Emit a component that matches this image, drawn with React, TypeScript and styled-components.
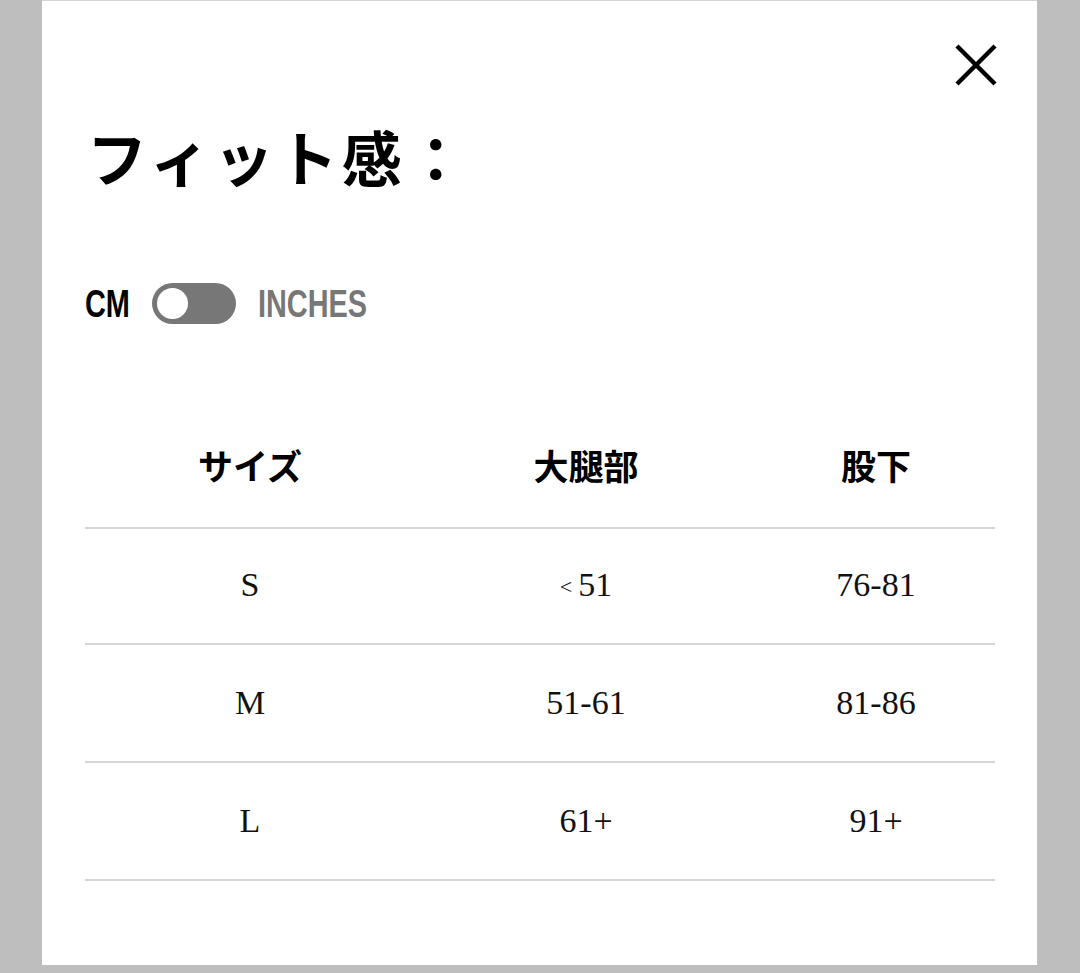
import React, { useState } from 'react';
import styled, { createGlobalStyle } from 'styled-components';

const JP_SANS = `"Noto Sans CJK JP", "Noto Sans", sans-serif`;
const UNIT_FONT = `"Liberation Sans", Arial, sans-serif`;
const SERIF = `"Liberation Serif", "Noto Sans CJK JP", serif`;

// the unit labels are a condensed face; squeeze Liberation Sans Bold to match
const SQUEEZE = 0.74;

const rows = [
  { size: 'S', thigh: '< 51', inseam: '76-81' },
  { size: 'M', thigh: '51-61', inseam: '81-86' },
  { size: 'L', thigh: '61+', inseam: '91+' },
];

// the "<" in the source is set smaller than the digits
const renderValue = (value: string) =>
  value.startsWith('<') ? (
    <>
      <StLess>&lt;</StLess>
      {value.slice(1).trim()}
    </>
  ) : (
    value
  );

const App: React.FC = () => {
  const [inches, setInches] = useState(false);

  return (
    <>
      <GlobalStyle />
      <StBackdrop>
        <StModal>
          <StCloseButton aria-label="close">
            <svg width="42" height="42" viewBox="0 0 42 42">
              <path d="M2 2 L40 40 M40 2 L2 40" stroke="#000" strokeWidth="4.5" />
            </svg>
          </StCloseButton>

          <StTitle>フィット感：</StTitle>

          <StUnitRow>
            <StUnit $active={!inches} $width={45}>
              <span>CM</span>
            </StUnit>
            <StSwitch onClick={() => setInches(!inches)} $on={inches}>
              <span />
            </StSwitch>
            <StUnit $active={inches} $width={110}>
              <span>INCHES</span>
            </StUnit>
          </StUnitRow>

          <StTable>
            <StHeadCell>サイズ</StHeadCell>
            <StHeadCell>大腿部</StHeadCell>
            <StHeadCell>股下</StHeadCell>
            {rows.map((r) => (
              <React.Fragment key={r.size}>
                <StCell>{r.size}</StCell>
                <StCell>{renderValue(r.thigh)}</StCell>
                <StCell>{r.inseam}</StCell>
              </React.Fragment>
            ))}
          </StTable>
        </StModal>
      </StBackdrop>
    </>
  );
};

export default App;

const GlobalStyle = createGlobalStyle`
  html, body {
    margin: 0;
    padding: 0;
    background: #bebebe;
  }
`;

const StBackdrop = styled.div`
  width: 1080px;
  height: 973px;
  background: #bebebe;
  padding: 0 43px 8px 42px;
  box-sizing: border-box;
`;

const StModal = styled.section`
  position: relative;
  height: 100%;
  background: #fff;
  border-top: 1px solid #d4d4d4;
  box-sizing: border-box;
  padding: 117px 42px 0 43px;
  display: flex;
  flex-direction: column;
`;

const StCloseButton = styled.button`
  position: absolute;
  top: 43px;
  right: 40px;
  border: none;
  background: transparent;
  padding: 0;
  cursor: pointer;
  line-height: 0;
`;

const StTitle = styled.h1`
  margin: 0 0 0 2px;
  font-family: ${JP_SANS};
  font-weight: 700;
  font-size: 60px;
  line-height: 76px;
  letter-spacing: 4px;
  color: #000;
`;

const StUnitRow = styled.div`
  display: flex;
  align-items: center;
  gap: 22px;
  margin-top: 88px;
  height: 42px;
`;

const StUnit = styled.span<{ $active: boolean; $width: number }>`
  display: block;
  width: ${(p) => p.$width}px;
  white-space: nowrap;
  font-family: ${UNIT_FONT};
  font-weight: 700;
  font-size: 39px;
  line-height: 1;
  color: ${(p) => (p.$active ? '#000' : '#777')};
  & span {
    display: inline-block;
    transform: scaleX(${SQUEEZE});
    transform-origin: left center;
  }
`;

const StSwitch = styled.button<{ $on: boolean }>`
  position: relative;
  flex: none;
  width: 84px;
  height: 41px;
  border: none;
  border-radius: 21px;
  background: #777;
  padding: 0;
  cursor: pointer;
  & span {
    position: absolute;
    top: 5px;
    left: ${(p) => (p.$on ? '48px' : '5px')};
    width: 31px;
    height: 31px;
    border-radius: 50%;
    background: #fff;
  }
`;

const StTable = styled.div`
  display: grid;
  grid-template-columns: 330px 342px 1fr;
  grid-auto-rows: 118px;
  margin-top: 85px;
`;

const StHeadCell = styled.div`
  display: flex;
  align-items: center;
  justify-content: center;
  height: 120px;
  padding-bottom: 8px;
  border-bottom: 2px solid #d6d6d6;
  box-sizing: border-box;
  font-family: ${JP_SANS};
  font-weight: 700;
  font-size: 35px;
  color: #000;
`;

const StCell = styled.div`
  display: flex;
  align-items: center;
  justify-content: center;
  border-bottom: 2px solid #d6d6d6;
  box-sizing: border-box;
  font-family: ${SERIF};
  font-size: 34px;
  color: #111;
`;

const StLess = styled.span`
  font-size: 22px;
  margin-right: 6px;
  position: relative;
  top: 2px;
`;
